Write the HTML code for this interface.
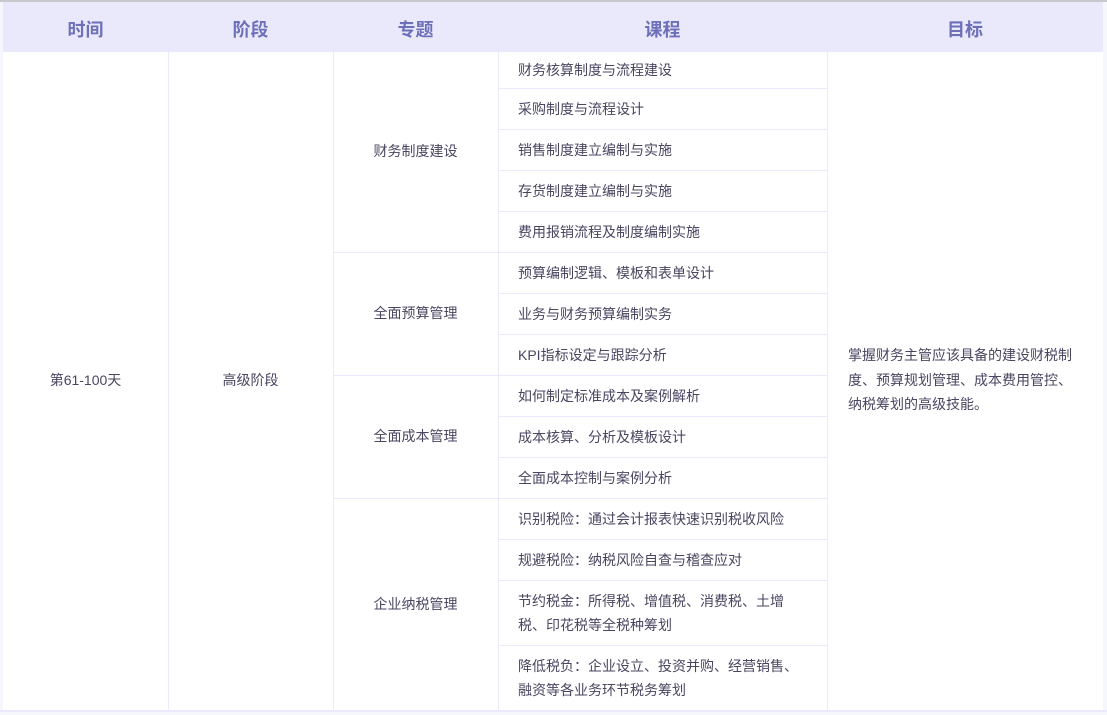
<!DOCTYPE html>
<html><head><meta charset="utf-8"><style>
*{margin:0;padding:0;box-sizing:border-box}
body{width:1107px;height:715px;background:#f6f6fd;font-family:"Liberation Sans","Noto Sans CJK SC",sans-serif;position:relative;overflow:hidden;color:#4a4560;font-size:14px}
.top{position:absolute;left:0;top:0;width:1107px;height:2px;background:#c8c8cc}
.hd{position:absolute;top:2px;left:3px;width:1100px;height:50px;background:#eae9fc}
.h{position:absolute;top:5px;height:50px;line-height:50px;text-align:center;font-weight:bold;font-size:18px;color:#6d70b8}
.body{position:absolute;top:52px;left:3px;width:1100px;height:658px;background:#fff}
.vl{position:absolute;top:52px;height:658px;width:1px;background:#ebe9fb}
.c{position:absolute;display:flex;align-items:center;justify-content:center;text-align:center}
.r{position:absolute;left:498px;width:329px;border-bottom:1px solid #ebe9fb;padding-left:20px;display:flex;align-items:center;line-height:24px;white-space:nowrap}
.hl{position:absolute;height:1px;background:#ebe9fb}
</style></head><body>
<div class="top"></div>
<div class="hd"></div>
<div class="h" style="left:3px;width:165px">时间</div>
<div class="h" style="left:168px;width:165px">阶段</div>
<div class="h" style="left:333px;width:165px">专题</div>
<div class="h" style="left:498px;width:329px">课程</div>
<div class="h" style="left:827px;width:276px">目标</div>
<div class="body"></div>
<div class="vl" style="left:168px"></div>
<div class="vl" style="left:333px"></div>
<div class="vl" style="left:498px"></div>
<div class="vl" style="left:827px"></div>
<div class="c" style="left:3px;width:165px;top:52px;height:656px">第61-100天</div>
<div class="c" style="left:168px;width:165px;top:52px;height:656px">高级阶段</div>
<div class="c" style="left:333px;width:165px;top:52px;height:198px">财务制度建设</div>
<div class="hl" style="left:333px;width:165px;top:252px"></div>
<div class="c" style="left:333px;width:165px;top:253px;height:120px">全面预算管理</div>
<div class="hl" style="left:333px;width:165px;top:375px"></div>
<div class="c" style="left:333px;width:165px;top:376px;height:120px">全面成本管理</div>
<div class="hl" style="left:333px;width:165px;top:498px"></div>
<div class="c" style="left:333px;width:165px;top:499px;height:209px">企业纳税管理</div>
<div class="r" style="top:52px;height:37px">财务核算制度与流程建设</div>
<div class="r" style="top:89px;height:41px">采购制度与流程设计</div>
<div class="r" style="top:130px;height:41px">销售制度建立编制与实施</div>
<div class="r" style="top:171px;height:41px">存货制度建立编制与实施</div>
<div class="r" style="top:212px;height:41px">费用报销流程及制度编制实施</div>
<div class="r" style="top:253px;height:41px">预算编制逻辑、模板和表单设计</div>
<div class="r" style="top:294px;height:41px">业务与财务预算编制实务</div>
<div class="r" style="top:335px;height:41px">KPI指标设定与跟踪分析</div>
<div class="r" style="top:376px;height:41px">如何制定标准成本及案例解析</div>
<div class="r" style="top:417px;height:41px">成本核算、分析及模板设计</div>
<div class="r" style="top:458px;height:41px">全面成本控制与案例分析</div>
<div class="r" style="top:499px;height:41px">识别税险：通过会计报表快速识别税收风险</div>
<div class="r" style="top:540px;height:41px">规避税险：纳税风险自查与稽查应对</div>
<div class="r" style="top:581px;height:65px"><div>节约税金：所得税、增值税、消费税、土增<br>税、印花税等全税种筹划</div></div>
<div class="r" style="top:646px;height:64px;border-bottom:none"><div>降低税负：企业设立、投资并购、经营销售、<br>融资等各业务环节税务筹划</div></div>
<div class="c" style="left:827px;width:276px;top:52px;height:656px;text-align:left;justify-content:flex-start;padding:0 20px 0 21px;line-height:24.5px">掌握财务主管应该具备的建设财税制度、预算规划管理、成本费用管控、纳税筹划的高级技能。</div>
<div class="hl" style="left:0;width:1107px;top:710px;height:2px;background:#ebe9fb"></div>
</body></html>
